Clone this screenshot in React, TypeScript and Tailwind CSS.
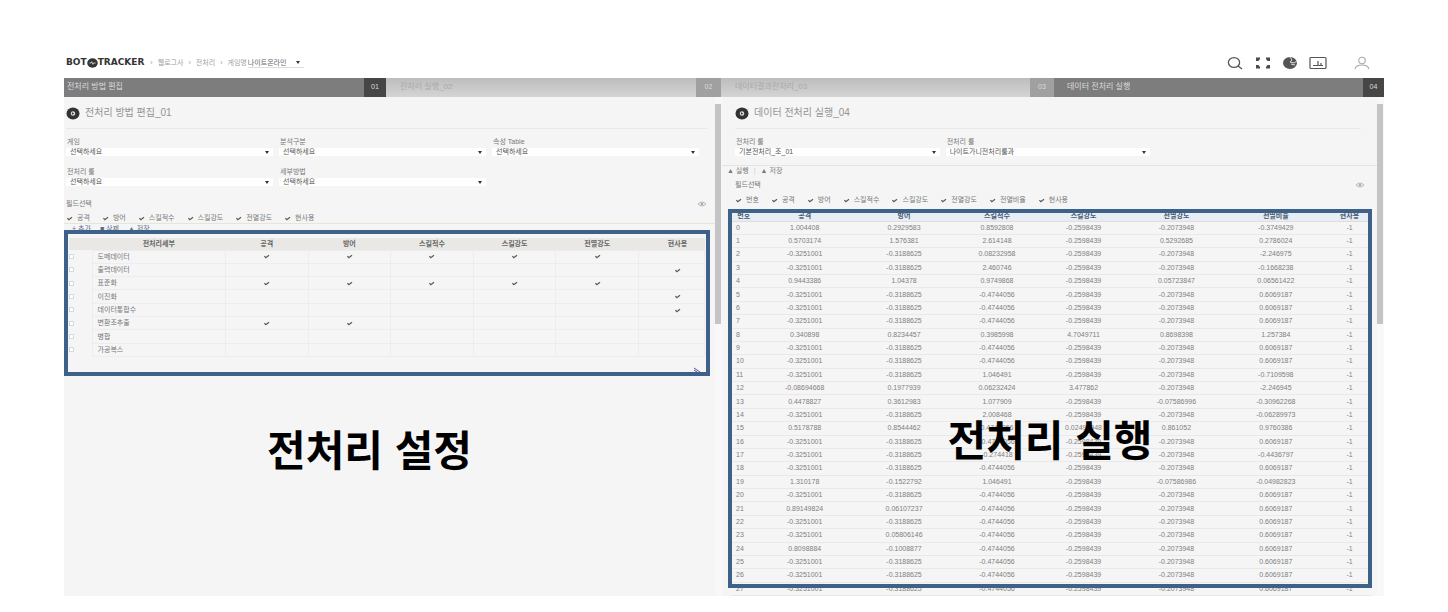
import { ReactNode } from "react";

const leftColumns = ["공격", "방어", "스킬적수", "스킬강도", "전멸강도", "현사용"];
const rightColumns = ["번호", "공격", "방어", "스킬적수", "스킬강도", "전멸강도", "전멸비율", "현사용"];

const rules = [
  { name: "도메데이터", checks: [1, 1, 1, 1, 1, 0] },
  { name: "출력데이터", checks: [0, 0, 0, 0, 0, 1] },
  { name: "표준화", checks: [1, 1, 1, 1, 1, 0] },
  { name: "이진화", checks: [0, 0, 0, 0, 0, 1] },
  { name: "데이터통합수", checks: [0, 0, 0, 0, 0, 1] },
  { name: "변환조추출", checks: [1, 1, 0, 0, 0, 0] },
  { name: "병합", checks: [0, 0, 0, 0, 0, 0] },
  { name: "가공복스", checks: [0, 0, 0, 0, 0, 0] },
];

const A = "-0.3251001";
const B = "-0.3188625";
const C = "-0.4744056";
const D = "-0.2598439";
const E = "-0.2073948";
const F = "0.6069187";

const results = [
  ["1.004408", "0.2929583", "0.8592808", D, E, "-0.3749429"],
  ["0.5703174", "1.576381", "2.614148", D, "0.5292685", "0.2786024"],
  [A, B, "0.08232958", D, E, "-2.246975"],
  [A, B, "2.460746", D, E, "-0.1668238"],
  ["0.9443386", "1.04378", "0.9749868", D, "0.05723847", "0.06561422"],
  [A, B, C, D, E, F],
  [A, B, C, D, E, F],
  [A, B, C, D, E, F],
  ["0.340898", "0.8234457", "0.3985998", "4.7049711", "0.8698398", "1.257384"],
  [A, B, C, D, E, F],
  [A, B, C, D, E, F],
  [A, B, "1.046491", D, E, "-0.7109598"],
  ["-0.08694668", "0.1977939", "0.06232424", "3.477862", E, "-2.246945"],
  ["0.4478827", "0.3612983", "1.077909", D, "-0.07586996", "-0.30962268"],
  [A, B, "2.008468", D, E, "-0.06289973"],
  ["0.5178788", "0.8544462", "0.4740856", "0.02498948", "0.861052", "0.9760386"],
  [A, B, C, D, E, F],
  [A, B, "-0.274418", D, E, "-0.4436797"],
  [A, B, C, D, E, F],
  ["1.310178", "-0.1522792", "1.046491", D, "-0.07586986", "-0.04982823"],
  [A, B, C, D, E, F],
  ["0.89149824", "0.06107237", C, D, E, F],
  [A, B, C, D, E, F],
  [A, "0.05806146", C, D, E, F],
  ["0.8098884", "-0.1008877", C, D, E, F],
  [A, B, C, D, E, F],
  [A, B, C, D, E, F],
  [A, B, C, D, E, F],
];

function Tick() {
  return (
    <svg viewBox="0 0 8 6" className="inline-block h-[5px] w-[7px] shrink-0" aria-hidden="true">
      <path d="M1.5 2.5 L3.2 4.5 L7 1.5" fill="none" stroke="#5a5a5a" strokeWidth="1.5" />
    </svg>
  );
}

function Caret() {
  return (
    <svg viewBox="0 0 4 3" className="pointer-events-none absolute right-1 top-[3px] h-[3px] w-1" aria-hidden="true">
      <path d="M0 0 H4 L2 3 Z" fill="#333" />
    </svg>
  );
}

function Field({ label, value, id }: { label: string; value: string; id: string }) {
  return (
    <div className="flex flex-col">
      <label htmlFor={id} className="h-[11px] pl-px leading-[10px]">
        {label}
      </label>
      <div className="relative">
        <select
          id={id}
          className="block h-2 w-full appearance-none bg-white pl-1 leading-[8px] text-[#555] outline-none"
        >
          <option>{value}</option>
        </select>
        <Caret />
      </div>
    </div>
  );
}

function Checks({ names }: { names: string[] }) {
  return (
    <div className="flex h-[10px] items-center gap-3">
      {names.map((name) => (
        <label key={name} className="flex items-center gap-1 leading-[10px]">
          <input type="checkbox" defaultChecked className="sr-only" />
          <Tick />
          {name}
        </label>
      ))}
    </div>
  );
}

function Eye() {
  return (
    <svg viewBox="0 0 10 8" className="h-2 w-[10px]" fill="none" stroke="#aaa" aria-hidden="true">
      <path d="M1 4 Q5 0 9 4 Q5 8 1 4 Z" strokeWidth="0.8" />
      <circle cx="5" cy="4" r="1.3" fill="#aaa" stroke="none" />
    </svg>
  );
}

function FieldHeading() {
  return (
    <div className="flex h-[10px] items-center justify-between">
      <span>필드선택</span>
      <button type="button" aria-label="보기">
        <Eye />
      </button>
    </div>
  );
}

function Title({ children }: { children: ReactNode }) {
  return (
    <div className="flex h-[14px] items-center gap-[5px]">
      <svg viewBox="0 0 14 14" className="h-[13px] w-[14px]" aria-hidden="true">
        <ellipse cx="7" cy="7" rx="7" ry="6.5" fill="#333" />
        <circle cx="7" cy="7" r="2.4" fill="#ddd" />
        <path d="M6 5.6 L8.2 7 L6 8.4 Z" fill="#333" />
      </svg>
      <h1 className="text-[10px] leading-[14px] text-[#939393]">{children}</h1>
    </div>
  );
}

function Scrollbar() {
  return (
    <div className="w-[7px] shrink-0 bg-[#f8f8f8] pt-[7px]">
      <div className="h-[220px] w-[6px] bg-[#c4c4c6]" />
    </div>
  );
}

function Header() {
  return (
    <header className="flex h-[78px] items-center justify-between pt-12 pr-[13px] text-[7px] text-[#a0a0a0]">
      <div className="flex items-center">
        <div className="flex items-center pl-0.5 text-[9px] font-bold text-[#333] font-['DejaVu_Sans',sans-serif]">
          BOT
          <svg viewBox="0 0 12 11" className="h-[10px] w-[11px]" aria-hidden="true">
            <ellipse cx="6" cy="5.5" rx="5.8" ry="5.2" fill="#333" />
            <path d="M2.5 5.5 H4.5 L5.2 4 L6.4 7 L7.2 5.5 H9.5" fill="none" stroke="#ddd" strokeWidth="0.9" />
          </svg>
          TRACKER
        </div>
        <nav className="ml-[6px] flex items-center gap-[5px]">
          <span>›</span>
          <a href="#analysis">웹로그사</a>
          <span>›</span>
          <a href="#preprocess">전처리</a>
          <span>›</span>
          <label htmlFor="game">게임명</label>
        </nav>
        <div className="relative ml-px w-14">
          <select
            id="game"
            className="block h-[10px] w-full appearance-none border-b border-[#ddd] bg-white leading-[9px] text-[#666]"
          >
            <option>나이트온라인</option>
          </select>
          <Caret />
        </div>
      </div>
      <div className="flex items-center gap-[11px]">
        <button type="button" aria-label="검색">
          <svg viewBox="0 0 18 16" className="h-4 w-[18px]" fill="none" stroke="#555" strokeWidth="1.3">
            <ellipse cx="8" cy="7.5" rx="5.6" ry="4.8" />
            <path d="M12 11 L16 14" />
          </svg>
        </button>
        <button type="button" aria-label="전체 화면">
          <svg viewBox="0 0 16 14" className="h-[14px] w-4" fill="#4a4a4a">
            <path d="M1 1.5 H5 V3 L3.5 5 H1 Z M15 1.5 H11 V3 L12.5 5 H15 Z M1 12.5 H5 V11 L3.5 9 H1 Z M15 12.5 H11 V11 L12.5 9 H15 Z" />
          </svg>
        </button>
        <button type="button" aria-label="언어">
          <svg viewBox="0 0 16 14" className="h-[14px] w-4">
            <ellipse cx="8" cy="7" rx="7" ry="6" fill="#555" />
            <path d="M8 1 L10 4 L8 6 L12 7 L15 5 M9 8 L13 9" fill="none" stroke="#ddd" strokeWidth="1" />
          </svg>
        </button>
        <button type="button" aria-label="대시보드">
          <svg viewBox="0 0 18 14" className="h-[14px] w-[18px]" fill="none" stroke="#555" strokeWidth="1.2">
            <rect x="1" y="1.5" width="16" height="11" rx="1" />
            <path d="M4 9.5 H14 M9 5 V9.5 M12 7 V9.5" />
          </svg>
        </button>
        <button type="button" aria-label="사용자" className="ml-[15px]">
          <svg viewBox="0 0 18 14" className="h-[14px] w-[18px]" fill="none" stroke="#aaa" strokeWidth="1.1">
            <circle cx="9" cy="4.5" r="3.2" />
            <path d="M2 13 Q3 9 9 9 Q15 9 16 13" />
          </svg>
        </button>
      </div>
    </header>
  );
}

function Tabs() {
  return (
    <nav className="grid h-[19px] grid-cols-[322fr_335fr_333fr_330fr] text-[8px] leading-[18px]">
      <a href="#tab1" className="flex bg-[#7d7d7d] text-[#dcdcdc]">
        <span className="flex-1 pl-[3px]">전처리 방법 편집</span>
        <span className="w-[22px] bg-[#464646] text-center text-[7px]">01</span>
      </a>
      <a href="#tab2" className="flex bg-linear-to-b from-[#bdbdbd] to-[#d4d4d4] text-[#aaa]">
        <span className="flex-1 pl-[14px]">전처리 실행_02</span>
        <span className="w-[25px] bg-[#a0a0a0] text-center text-[7px] text-[#ddd]">02</span>
      </a>
      <a href="#tab3" className="flex bg-linear-to-b from-[#bdbdbd] to-[#d4d4d4] text-[#aaa]">
        <span className="flex-1 pl-[14px]">데이터결과전처리_03</span>
        <span className="w-[24px] bg-[#a0a0a0] text-center text-[7px] text-[#ddd]">03</span>
      </a>
      <a href="#tab4" className="flex bg-[#7d7d7d] text-[#dcdcdc]">
        <span className="flex-1 pl-[13px]">데이터 전처리 실행</span>
        <span className="w-[21px] bg-[#464646] text-center text-[7px]">04</span>
      </a>
    </nav>
  );
}

function RuleTable() {
  return (
    <table className="h-[119px] w-full table-fixed border-collapse text-center leading-[8px]">
      <colgroup>
        <col className="w-[23px]" />
        <col className="w-[21%]" />
        <col className="w-[13%]" />
        <col className="w-[13%]" />
        <col className="w-[13%]" />
        <col className="w-[13%]" />
        <col className="w-[13%]" />
        <col />
      </colgroup>
      <thead>
        <tr className="h-3 bg-[#e9e8e5] text-[#666]">
          <th />
          <th>전처리세부</th>
          {leftColumns.map((name) => (
            <th key={name} className="p-0 last:pl-3">
              {name}
            </th>
          ))}
        </tr>
      </thead>
      <tbody>
        {rules.map((rule) => (
          <tr key={rule.name}>
            <td className="p-0 text-left">
              <input
                type="checkbox"
                aria-label={rule.name}
                className="block size-[5px] appearance-none border border-[#cfdbe8] bg-white"
              />
            </td>
            <td className="border border-[#ededed] p-0 pl-[5px] text-left">{rule.name}</td>
            {rule.checks.map((on, i) => (
              <td key={i} className="border border-[#ededed] p-0 last:pl-3">
                {on ? <Tick /> : null}
              </td>
            ))}
          </tr>
        ))}
      </tbody>
    </table>
  );
}

function ResultTable() {
  return (
    <table className="h-[387px] w-full table-fixed border-collapse text-center leading-[8px] text-[#808080]">
      <colgroup>
        <col className="w-[4%]" />
        <col className="w-[15%]" />
        <col className="w-[16%]" />
        <col className="w-[13%]" />
        <col className="w-[14%]" />
        <col className="w-[15%]" />
        <col className="w-[16%]" />
        <col className="w-[7%]" />
      </colgroup>
      <thead>
        <tr className="h-3 border-b border-[#e3dcda] bg-[#e6edf5] text-[#4a5a70]">
          {rightColumns.map((name) => (
            <th key={name} className="p-0 pt-0.5">
              {name}
            </th>
          ))}
        </tr>
      </thead>
      <tbody>
        {results.map((row, i) => (
          <tr key={i} className="border-b border-[#e9e9e9]">
            <td className="p-0 pl-[5px] text-left">{i}</td>
            {row.map((value, j) => (
              <td key={j} className="p-0">
                {value}
              </td>
            ))}
            <td className="p-0">-1</td>
          </tr>
        ))}
      </tbody>
    </table>
  );
}

function SettingsPanel() {
  return (
    <section className="flex">
      <div className="min-w-0 flex-1 pt-[9px]">
        <div className="pr-2 pl-0.5">
          <Title>전처리 방법 편집_01</Title>
          <div className="mt-2 border-t border-[#e9e9e9]" />
          <div className="mt-[8px] grid grid-cols-3 gap-x-[6px] gap-y-[11px] pr-2">
            <Field id="job" label="게임" value="선택하세요" />
            <Field id="group" label="분석구분" value="선택하세요" />
            <Field id="source" label="속성 Table" value="선택하세요" />
            <Field id="rule" label="전처리 룰" value="선택하세요" />
            <Field id="method" label="세부방법" value="선택하세요" />
          </div>
          <div className="mt-[13px]">
            <FieldHeading />
          </div>
          <div className="mt-1">
            <Checks names={leftColumns} />
          </div>
        </div>
        <div className="flex h-[11px] items-center gap-[9px] border-t border-[#e9e4da] pl-2 text-[#5d6b8c]">
          <button type="button">+ 추가</button>
          <button type="button">■ 삭제</button>
          <button type="button">▲ 저장</button>
        </div>
        <div className="relative mr-[5px] h-[142px] px-[5px] pt-1">
          <RuleTable />
          <svg viewBox="0 0 8 6" className="absolute right-[9px] bottom-[3px] z-10 h-[6px] w-2" aria-hidden="true">
            <path d="M1 1 L7 5 M1 3 L4 5" stroke="#5b4f9a" fill="none" />
          </svg>
          <div className="absolute inset-0 -top-1 border-4 border-[#3d6189]" />
        </div>
        <h2 className="mt-14 pr-10 text-center text-[42px] leading-[40px] font-bold text-black">전처리 설정</h2>
      </div>
      <Scrollbar />
    </section>
  );
}

function RunPanel() {
  return (
    <section className="flex">
      <div className="min-w-0 flex-1 pt-[9px]">
        <div className="pr-4 pl-[13px]">
          <Title>데이터 전처리 실행_04</Title>
          <div className="mt-2 border-t border-[#e9e9e9]" />
          <div className="mt-[8px] grid grid-cols-3 gap-x-[6px]">
            <Field id="run-rule" label="전처리 룰" value="기본전처리_조_01" />
            <Field id="run-name" label="전처리 룰" value="나이트가니전처리룰과" />
          </div>
        </div>
        <div className="mt-[9px] flex h-3 items-center gap-[5px] border-t border-[#e4e4e4] pl-[5px]">
          <button type="button">▲ 실행</button>
          <span className="text-[#ccc]">|</span>
          <button type="button">▲ 저장</button>
        </div>
        <div className="mt-[3px] pr-3 pl-[13px]">
          <FieldHeading />
          <div className="mt-[5px]">
            <Checks names={rightColumns} />
          </div>
        </div>
        <div className="relative mt-1 mr-[5px] ml-[6px] pl-[3px]">
          <ResultTable />
          <div className="absolute inset-x-0 top-0 bottom-2 border-4 border-[#3d6189]" />
          <h2 className="absolute inset-x-0 top-[213px] text-center text-[42px] leading-[40px] font-bold text-black">
            전처리 실행
          </h2>
        </div>
      </div>
      <Scrollbar />
    </section>
  );
}

export default function App() {
  return (
    <div className="min-h-screen bg-white pr-16 pl-16 font-['Liberation_Sans','Noto_Sans_CJK_KR',sans-serif]">
      <Header />
      <Tabs />
      <main className="grid grid-cols-[658fr_662fr] bg-[#f5f5f5] text-[7px] text-[#787878]">
        <SettingsPanel />
        <RunPanel />
      </main>
    </div>
  );
}
